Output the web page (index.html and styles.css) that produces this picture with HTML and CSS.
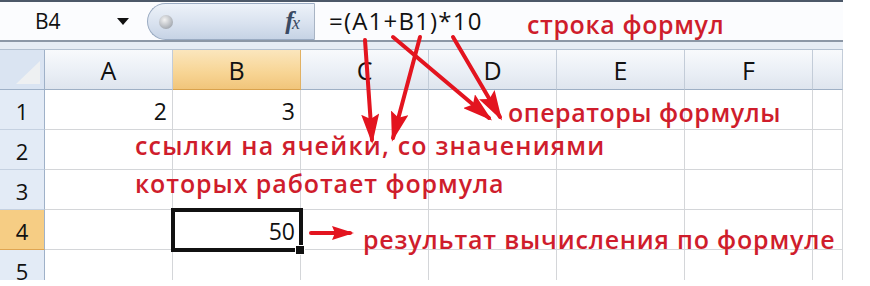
FILE: index.html
```html
<!DOCTYPE html>
<html lang="ru">
<head>
    <meta charset="UTF-8">
    <title>Строка формул</title>
    <link rel="stylesheet" href="styles.css">
</head>
<body>
<div class="sheet">
    <!--строка формул-->
    <div class="fbar">
        <div class="namebox">
            <span class="ref">B4</span>
            <span class="drop"></span>
        </div>
        <div class="pill">
            <span class="knob"></span>
            <span class="fx">f<i>x</i></span>
        </div>
        <div class="formula">=(A1+B1)*10</div>
    </div>
    <div class="strip"></div>

    <!--таблица-->
    <div class="grid">
        <div class="corner"></div>
        <div class="colh">A</div>
        <div class="colh on">B</div>
        <div class="colh">C</div>
        <div class="colh">D</div>
        <div class="colh">E</div>
        <div class="colh">F</div>
        <div class="colh"></div>

        <div class="rowh">1</div>
        <div class="cell">2</div>
        <div class="cell">3</div>
        <div class="cell"></div><div class="cell"></div><div class="cell"></div><div class="cell"></div><div class="cell"></div>

        <div class="rowh">2</div>
        <div class="cell"></div><div class="cell"></div><div class="cell"></div><div class="cell"></div><div class="cell"></div><div class="cell"></div><div class="cell"></div>

        <div class="rowh">3</div>
        <div class="cell"></div><div class="cell"></div><div class="cell"></div><div class="cell"></div><div class="cell"></div><div class="cell"></div><div class="cell"></div>

        <div class="rowh on">4</div>
        <div class="cell"></div>
        <div class="cell sel">50</div>
        <div class="cell"></div><div class="cell"></div><div class="cell"></div><div class="cell"></div><div class="cell"></div>

        <div class="rowh">5</div>
        <div class="cell"></div><div class="cell"></div><div class="cell"></div><div class="cell"></div><div class="cell"></div><div class="cell"></div><div class="cell"></div>
    </div>

    <!--стрелки-->
    <svg class="arrows" width="843" height="280" viewBox="0 0 843 280">
        <defs>
            <marker id="head" markerUnits="userSpaceOnUse" markerWidth="30" markerHeight="18" refX="26" refY="9" orient="auto">
                <path d="M0,0 L30,9 L0,18 L5,9 Z" fill="#e3141f"/>
            </marker>
            <marker id="head2" markerUnits="userSpaceOnUse" markerWidth="22" markerHeight="14" refX="18" refY="7" orient="auto">
                <path d="M0,0 L22,7 L0,14 L3,7 Z" fill="#e3141f"/>
            </marker>
        </defs>
        <g stroke="#e3141f" stroke-width="4" stroke-linecap="round">
            <line x1="365" y1="40" x2="372" y2="140" marker-end="url(#head)"/>
            <line x1="420" y1="37" x2="393" y2="138" marker-end="url(#head)"/>
            <line x1="393" y1="37" x2="489" y2="118" marker-end="url(#head)"/>
            <line x1="453" y1="37" x2="500" y2="117" marker-end="url(#head)"/>
            <line x1="311" y1="233" x2="350" y2="233" marker-end="url(#head2)"/>
        </g>
    </svg>

    <!--подписи-->
    <div class="note n-bar">строка формул</div>
    <div class="note n-ops">операторы формулы</div>
    <div class="note n-refs">ссылки на ячейки, со значениями</div>
    <div class="note n-refs2">которых работает формула</div>
    <div class="note n-res">результат вычисления по формуле</div>
</div>
</body>
</html>
```

FILE: styles.css
```css
body {
    margin: 0;
    background-color: #fff;
    font-family: "Open Sans", "Liberation Sans", sans-serif;
}

.sheet {
    width: 843px;
    height: 280px;
    position: relative;
    overflow: hidden;
}

/*строка формул*/
.fbar {
    height: 42px;
    box-sizing: border-box;
    border-top: 2px solid #4c5868;
    border-bottom: 2px solid #8c97a6;
    background-color: #fbfcfe;
    display: flex;
}

.namebox {
    width: 147px;
    display: flex;
    align-items: center;
    padding-left: 35px;
    box-sizing: border-box;
}

.namebox .ref {
    font-size: 21px;
    color: #111;
    width: 82px;
}

.namebox .drop {
    width: 0;
    height: 0;
    border-left: 6px solid transparent;
    border-right: 6px solid transparent;
    border-top: 7px solid #111;
}

.pill {
    width: 168px;
    box-sizing: border-box;
    margin-top: 1px;
    border: 1px solid #9aabc2;
    border-right-color: #a8b4c4;
    border-radius: 20px 0 0 20px;
    background: linear-gradient(#edf2f9, #d9e2ef 55%, #c6d3e5);
    display: flex;
    align-items: center;
    justify-content: space-between;
    padding: 0 16px 0 11px;
}

.pill .knob {
    width: 14px;
    height: 14px;
    border-radius: 50%;
    background: radial-gradient(circle at 40% 35%, #f3f3f3, #a9aeb5 70%, #8e949c);
}

.pill .fx {
    font-family: "Liberation Serif", serif;
    font-style: italic;
    font-weight: bold;
    font-size: 26px;
    line-height: 30px;
    color: #3a4a63;
    letter-spacing: -2px;
}

.pill .fx i {
    font-size: 18px;
    font-weight: normal;
}

.formula {
    padding-left: 14px;
    font-size: 24px;
    line-height: 38px;
    color: #111;
    letter-spacing: 1.2px;
}

.strip {
    height: 8px;
    box-sizing: border-box;
    background-color: #e6ecf4;
    border-bottom: 1px solid #b3c0d0;
}

/*таблица*/
.grid {
    display: grid;
    grid-template-columns: 45px repeat(6, 128px) 30px;
    grid-auto-rows: 40px;
}

.grid > div {
    box-sizing: border-box;
    color: #111;
}

.corner {
    background-color: #dae4f2;
    border-right: 1px solid #9fb1c8;
    border-bottom: 1px solid #9fb1c8;
    position: relative;
}

.corner::after {
    content: "";
    position: absolute;
    right: 4px;
    bottom: 5px;
    width: 0;
    height: 0;
    border-left: 24px solid transparent;
    border-bottom: 23px solid #eef0f2;
}

.colh {
    background: linear-gradient(#f8fafc, #e9eef5 60%, #dfe5ee);
    border-right: 1px solid #c3ccd8;
    border-bottom: 1px solid #9fb0c5;
    display: flex;
    align-items: center;
    justify-content: center;
    font-size: 25px;
}

.colh.on {
    background: linear-gradient(#fbe6bd, #f7d493 60%, #f1c57b);
    border-right-color: #e1b163;
    border-bottom-color: #d9a24d;
}

.rowh {
    background-color: #e3ebf6;
    border-right: 1px solid #9fb1c8;
    border-bottom: 1px solid #c5d1e1;
    display: flex;
    align-items: flex-end;
    justify-content: center;
    padding-bottom: 3px;
    font-size: 22px;
}

.rowh.on {
    background-color: #f6cd84;
    border-bottom-color: #dfa552;
}

.cell {
    background-color: #fff;
    border-right: 1px solid #d4d6d9;
    border-bottom: 1px solid #d4d6d9;
    display: flex;
    align-items: flex-end;
    justify-content: flex-end;
    padding: 0 5px 2px 0;
    font-size: 23px;
}

.cell.sel {
    position: relative;
}

.cell.sel::before {
    content: "";
    position: absolute;
    left: -2px;
    top: -2px;
    right: -3px;
    bottom: -3px;
    border: 4px solid #111;
}

.cell.sel::after {
    content: "";
    position: absolute;
    right: -5px;
    bottom: -6px;
    width: 8px;
    height: 8px;
    background-color: #111;
    border: 1px solid #fff;
}

/*стрелки и подписи*/
.arrows {
    position: absolute;
    left: 0;
    top: 0;
}

.note {
    position: absolute;
    color: #cf1d2c;
    font-size: 25px;
    font-weight: 600;
    line-height: 30px;
    white-space: nowrap;
    letter-spacing: 1px;
}

.n-bar {
    left: 527px;
    top: 9px;
    letter-spacing: 0.6px;
}

.n-ops {
    left: 508px;
    top: 97px;
    letter-spacing: 0.5px;
}

.n-refs {
    left: 135px;
    top: 130px;
    letter-spacing: 1.2px;
}

.n-refs2 {
    left: 135px;
    top: 168px;
    letter-spacing: 0.9px;
}

.n-res {
    left: 363px;
    top: 224px;
    letter-spacing: 0.8px;
}
```
